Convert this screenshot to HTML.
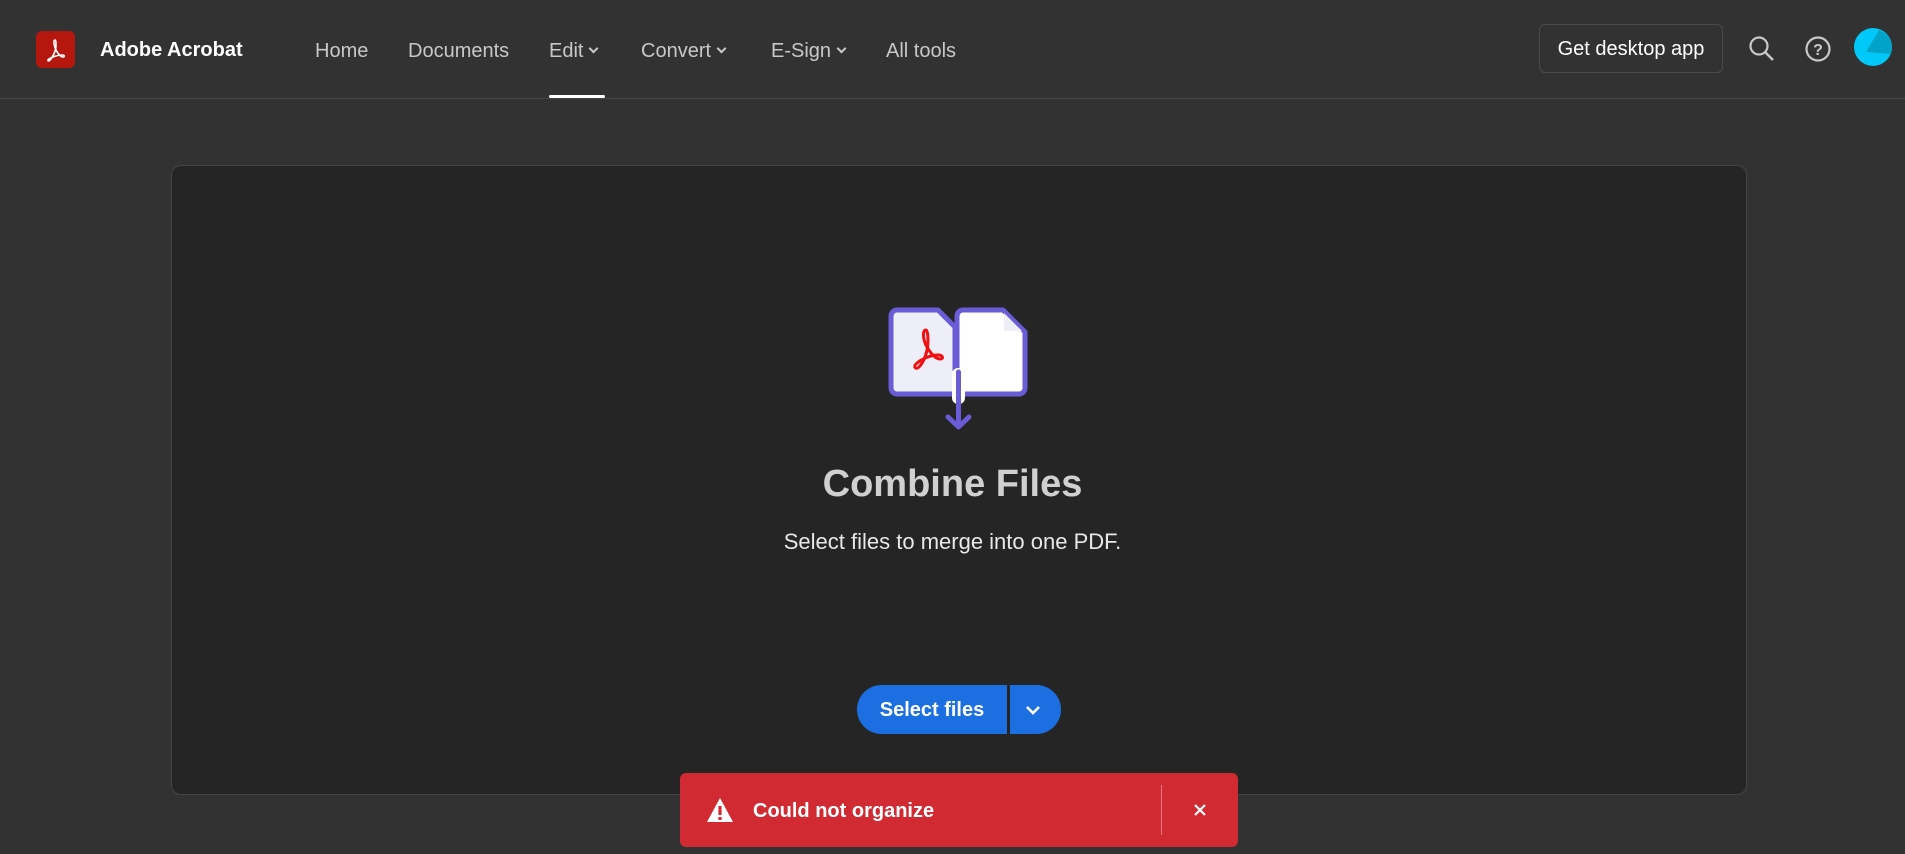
<!DOCTYPE html>
<html><head><meta charset="utf-8"><style>
*{margin:0;padding:0;box-sizing:border-box}
body{width:1905px;height:854px;background:#323232;font-family:"Liberation Sans",sans-serif;position:relative;overflow:hidden}
.hdr{position:absolute;left:0;top:0;width:1905px;height:99px;border-bottom:1px solid #444}
.logo{position:absolute;left:36px;top:31px;width:39px;height:37px;background:#b5160d;border-radius:6px}
.brand{position:absolute;left:100px;top:39px;font-size:20px;font-weight:bold;color:#fff}
.nav{position:absolute;top:40px;font-size:20px;color:#c8c8c8}
.chev{display:inline-block;width:7px;height:7px;border-right:2px solid #c8c8c8;border-bottom:2px solid #c8c8c8;transform:rotate(45deg);margin-left:7px;position:relative;top:-5px}
.ul{position:absolute;left:549px;top:95px;width:56px;height:3px;background:#fff;border-radius:2px}
.gda{position:absolute;left:1539px;top:24px;width:184px;height:49px;border:1px solid #4a4a4a;border-radius:6px;color:#fff;font-size:20px;text-align:center;line-height:49px}
.card{position:absolute;left:171px;top:165px;width:1576px;height:630px;background:#252525;border:1px solid #444;border-radius:10px}
.title{position:absolute;left:0;width:1905px;top:463px;text-align:center;font-size:38px;font-weight:bold;color:#d0d0d0}
.sub{position:absolute;left:0;width:1905px;top:529px;text-align:center;font-size:22px;color:#e8e8e8}
.btn{position:absolute;top:685px;height:49px;background:#1b6fe0;color:#fff;font-weight:bold;font-size:20px;line-height:51px;text-align:center}
.toast{position:absolute;left:680px;top:773px;width:558px;height:74px;background:#d12a32;border-radius:6px;color:#fff}
</style></head><body>
<div class="hdr">
<div class="logo"><svg width="39" height="37" viewBox="0 0 39 37"><path d="M19 9c-2 0-1 6 1 10s5 7 7 7 2-2-1-2c-4 0-10 2-13 4-2 1-1 3 1 1 3-3 6-10 6-14 0-3 0-6-1-6z" fill="none" stroke="#fff" stroke-width="1.6"/></svg></div>
<div class="brand">Adobe Acrobat</div>
<div class="nav" style="left:315px">Home</div>
<div class="nav" style="left:408px">Documents</div>
<div class="nav" style="left:549px">Edit<span class="chev"></span></div>
<div class="nav" style="left:641px">Convert<span class="chev"></span></div>
<div class="nav" style="left:771px">E-Sign<span class="chev"></span></div>
<div class="nav" style="left:886px">All tools</div>
<div class="ul"></div>
<div class="gda">Get desktop app</div>
<svg style="position:absolute;left:1748px;top:35px" width="28" height="28" viewBox="0 0 28 28"><circle cx="11" cy="11" r="8.5" fill="none" stroke="#c8c8c8" stroke-width="2.2"/><path d="M17 17l8 8" stroke="#c8c8c8" stroke-width="2.4"/></svg>
<svg style="position:absolute;left:1804px;top:35px" width="28" height="28" viewBox="0 0 28 28"><circle cx="14" cy="14" r="11.5" fill="none" stroke="#c8c8c8" stroke-width="2.2"/><text x="14" y="20" text-anchor="middle" font-family="Liberation Sans" font-weight="bold" font-size="16" fill="#c8c8c8">?</text></svg>
<svg style="position:absolute;left:1854px;top:28px" width="38" height="38" viewBox="0 0 38 38"><circle cx="19" cy="19" r="19" fill="#00c8f8"/><path d="M25 2 L12 24 L37 26 A19 19 0 0 0 25 2z" fill="#01a3c9"/></svg>
</div>
<div class="card"></div>
<svg style="position:absolute;left:888px;top:306px" width="142" height="124" viewBox="0 0 142 124">
<path d="M9 4h41l17 17v67H9a6 6 0 0 1-6-6V10a6 6 0 0 1 6-6z" fill="#eeeef8" stroke="#6a5bd6" stroke-width="5" stroke-linejoin="round"/>
<path d="M69 10a6 6 0 0 1 6-6h40l22 22v56a6 6 0 0 1-6 6H69z" fill="#fff" stroke="#6a5bd6" stroke-width="5" stroke-linejoin="round"/>
<path d="M116 7l18 18h-18z" fill="#eeeef8"/>
<path d="M38 24c-4 0-3 10 1 17s9 12 13 12 3-4-2-4c-7 0-17 4-22 9-3 3 0 6 3 3 6-6 9-18 9-26 0-7-1-11-2-11z" fill="none" stroke="#f01010" stroke-width="3"/>
<rect x="64" y="62" width="13" height="36" rx="6" fill="#fff"/>
<path d="M70.5 66v55M60 111l10.5 10 10.5-10" fill="none" stroke="#6a5bd6" stroke-width="5" stroke-linecap="round" stroke-linejoin="round"/>
</svg>
<div class="title">Combine Files</div>
<div class="sub">Select files to merge into one PDF.</div>
<div class="btn" style="left:857px;width:150px;border-radius:25px 0 0 25px">Select files</div>
<div class="btn" style="left:1010px;width:51px;border-radius:0 25px 25px 0"><svg width="18" height="12" viewBox="0 0 18 12" style="margin-top:19px;margin-left:-6px"><path d="M3 3l6 6 6-6" fill="none" stroke="#fff" stroke-width="2.6"/></svg></div>
<div class="toast">
<svg style="position:absolute;left:26px;top:24px" width="28" height="26" viewBox="0 0 28 26"><path d="M14 1L27 25H1z" fill="#fff"/><rect x="12.4" y="9" width="3.2" height="9" fill="#d12a32"/><rect x="12.4" y="20" width="3.2" height="3" fill="#d12a32"/></svg>
<div style="position:absolute;left:73px;top:27px;font-size:20px;font-weight:bold">Could not organize</div>
<div style="position:absolute;left:481px;top:12px;width:1px;height:50px;background:#e5767b"></div>
<svg style="position:absolute;left:512px;top:29px" width="16" height="16" viewBox="0 0 16 16"><path d="M3 3l10 10M13 3L3 13" stroke="#fff" stroke-width="2.2"/></svg>
</div>
</body></html>
